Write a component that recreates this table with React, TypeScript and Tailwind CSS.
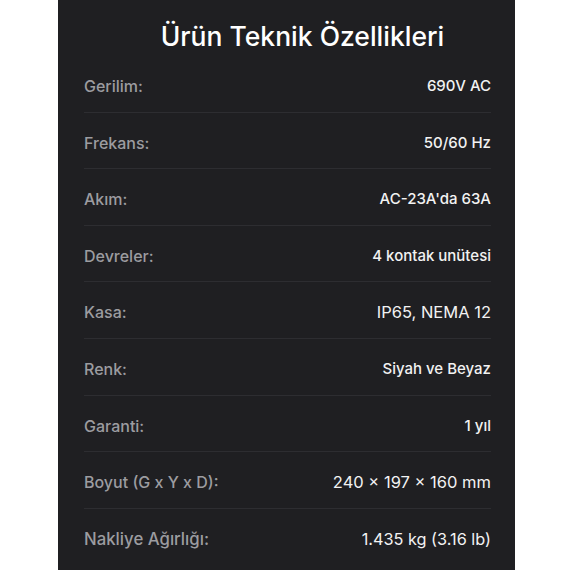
type Spec = { label: string; value: string; labelCls?: string; valueCls?: string }

const specs: Spec[] = [
  { label: 'Gerilim:', value: '690V AC' },
  { label: 'Frekans:', value: '50/60 Hz' },
  { label: 'Akım:', value: "AC-23A'da 63A" },
  { label: 'Devreler:', value: '4 kontak unütesi' },
  { label: 'Kasa:', value: 'IP65, NEMA 12', valueCls: 'text-[16.5px] font-normal' },
  { label: 'Renk:', value: 'Siyah ve Beyaz' },
  { label: 'Garanti:', value: '1 yıl' },
  { label: 'Boyut (G x Y x D):', value: '240 × 197 × 160 mm', valueCls: 'text-[16.5px] font-normal' },
  {
    label: 'Nakliye Ağırlığı:',
    value: '1.435 kg (3.16 lb)',
    labelCls: 'text-[16.8px]',
    valueCls: 'text-[16.3px] font-normal',
  },
]

export default function App() {
  return (
    <div className="min-h-[570px] bg-white font-['Inter',sans-serif]">
      <div className="ml-[58px] w-[457px] h-[570px] bg-[#1f1f22] overflow-hidden">
        <h1 className="pt-[20px] pb-[4px] pl-[32px] text-center text-[26.5px] leading-[32px] font-medium text-white">
          Ürün Teknik Özellikleri
        </h1>
        <div className="flex flex-col">
          {specs.map((s, i) => (
            <div
              key={s.label}
              className={
                'ml-[26px] mr-[24px] flex items-center justify-between pt-[20px] pb-[15.6px] ' +
                (i < specs.length - 1 ? 'border-b border-[#2d2d31]' : 'border-b border-transparent')
              }
            >
              <span className={'leading-[20px] font-medium text-[#9c9ca0] ' + (s.labelCls ?? 'text-[16px]')}>
                {s.label}
              </span>
              <span className={'leading-[20px] text-[#f2f2f2] ' + (s.valueCls ?? 'text-[15px] font-medium')}>
                {s.value}
              </span>
            </div>
          ))}
        </div>
      </div>
    </div>
  )
}
